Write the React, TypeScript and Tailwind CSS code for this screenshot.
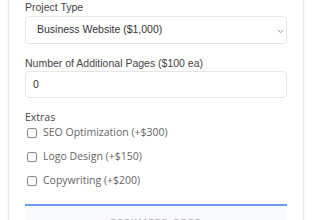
import React from "react";

export default function App() {
  const extras = [
    "SEO Optimization (+$300)",
    "Logo Design (+$150)",
    "Copywriting (+$200)",
  ];
  return (
    <div className="w-[330px] h-[220px] overflow-hidden bg-white">
      <div className="ml-2 w-[296px] h-[260px] bg-white border-x border-[#ececec] shadow-[0_1px_3px_rgba(0,0,0,0.06)] px-4">
        <div className="flex flex-col">
          <label className="text-[10.5px] leading-[14px] text-[#444] font-['Liberation_Sans',Arial,sans-serif]">
            Project Type
          </label>
          <div className="relative mt-[2px] h-[28px] rounded-[4px] border border-[#e6e6e6] bg-white flex items-center pl-[11px] pr-2">
            <span className="text-[10.5px] text-[#333] font-['Liberation_Sans',Arial,sans-serif]">
              Business Website ($1,000)
            </span>
            <svg className="absolute right-[2px] top-[12px]" width="7" height="5" viewBox="0 0 7 5">
              <path d="M1 1.2 L3.5 3.6 L6 1.2" fill="none" stroke="#999" strokeWidth="1" />
            </svg>
          </div>

          <label className="mt-3 text-[10.5px] leading-[14px] text-[#444] font-['Liberation_Sans',Arial,sans-serif]">
            Number of Additional Pages ($100 ea)
          </label>
          <div className="mt-[1px] h-[27px] rounded-[4px] border border-[#e6e6e6] bg-white flex items-center pl-[7px]">
            <span className="text-[10.5px] text-[#333] font-['Liberation_Sans',Arial,sans-serif]">0</span>
          </div>

          <div className="mt-3 text-[10.5px] leading-[14px] text-[#444] font-['Open_Sans',sans-serif]">
            Extras
          </div>
          <div className="flex flex-col gap-[6px]">
            {extras.map((e) => (
              <div key={e} className="h-[18px] flex items-center">
                <span className="ml-[2px] w-[10px] h-[10px] rounded-[2px] border border-[#888] bg-white" />
                <span className="ml-[6px] text-[10.5px] text-[#666] font-['Open_Sans',sans-serif]">{e}</span>
              </div>
            ))}
          </div>

          <div className="mt-[14px] border-t-2 border-[#6b9af0] bg-[#f8f9fc] h-[40px] flex justify-center pt-[10px]">
            <span className="text-[8px] tracking-[1.5px] text-[#999] font-['Liberation_Sans',Arial,sans-serif]">
              ESTIMATED COST
            </span>
          </div>
        </div>
      </div>
    </div>
  );
}
